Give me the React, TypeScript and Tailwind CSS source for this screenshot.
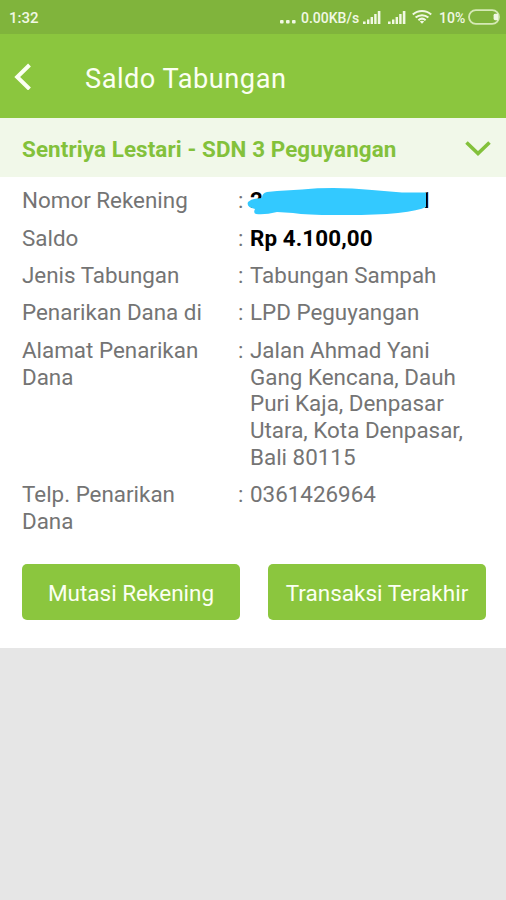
import React from "react";

function Signal() {
  return (
    <svg width="18" height="13" viewBox="0 0 18 13" fill="#f1f8e4">
      <rect x="0" y="10.5" width="2.6" height="2.5" />
      <rect x="4" y="8.5" width="2.4" height="4.5" />
      <rect x="7.6" y="6" width="2.4" height="7" />
      <rect x="11.2" y="3" width="2.4" height="10" />
      <rect x="14.8" y="0" width="2.6" height="13" />
    </svg>
  );
}

function StatusBar() {
  return (
    <div className="flex h-[34px] items-center bg-[#80b43c] pl-[9px] pr-[6px] text-[#f1f8e4]">
      <span className="pt-[3px] text-[15px] font-medium leading-none">1:32</span>
      <div className="ml-auto flex items-center">
        <svg width="16" height="4" viewBox="0 0 16 4" fill="#f1f8e4" className="mt-[10px]">
          <rect x="0" y="0" width="3.6" height="3.6" rx="1" />
          <rect x="6" y="0" width="3.6" height="3.6" rx="1" />
          <rect x="12" y="0" width="3.6" height="3.6" rx="1" />
        </svg>
        <span className="ml-[5px] w-[58px] whitespace-nowrap pt-px text-[14px] font-medium leading-none">0.00KB/s</span>
        <div className="ml-[4px]"><Signal /></div>
        <div className="ml-[7px]"><Signal /></div>
        <svg width="20" height="14" viewBox="0 0 20 14" fill="none" stroke="#f1f8e4" strokeWidth="2" className="ml-[6px]">
          <path d="M0.8 4.6C6 -0.2 14 -0.2 19.2 4.6" />
          <path d="M3.6 7.6C7.3 4.3 12.7 4.3 16.4 7.6" />
          <path d="M6.4 10.2C8.6 8.3 11.4 8.3 13.6 10.2" />
          <path d="M10 13.8L7.8 11.6Q10 10 12.2 11.6Z" fill="#f1f8e4" stroke="none" />
        </svg>
        <span className="ml-[7px] w-[27px] whitespace-nowrap pt-[2px] text-[14px] font-medium leading-none">10%</span>
        <svg width="32" height="16" viewBox="0 0 32 16" fill="none" className="ml-[2px]">
          <rect x="1" y="1.2" width="30" height="13.6" rx="6.8" stroke="#d5e9b5" strokeWidth="1.8" />
          <path d="M30 4.8h-2.8q-1.6 0-1.6 1.4v3.6q0 1.4 1.6 1.4H30z" fill="#f1f8e4" />
        </svg>
      </div>
    </div>
  );
}

function Row({ label, children }: { label: string; children: React.ReactNode }) {
  return (
    <div className="flex items-start">
      <div className="w-[216px] pr-[10px]">{label}</div>
      <div className="w-[12px]">:</div>
      <div className="w-[222px]">{children}</div>
    </div>
  );
}

export default function App() {
  return (
    <div className="flex h-[900px] w-[506px] flex-col overflow-hidden bg-[#e6e6e6] font-['Roboto',sans-serif]">
      <StatusBar />
      <header className="flex h-[84px] items-center bg-[#8bc63e] pl-[14px] text-white">
        <svg width="18" height="28" viewBox="0 0 18 28" fill="none" stroke="#fbfff2" strokeWidth="4">
          <path d="M15.5 3L3.2 15L15.5 27" />
        </svg>
        <h1 className="ml-[53px] mt-[5px] text-[27.2px] leading-8 tracking-[0.5px] text-[#fbfff2]">Saldo Tabungan</h1>
      </header>
      <section className="flex h-[59px] items-center justify-between bg-[#f1f8e9] pl-[22px] pr-[15px] text-[22.4px] font-bold text-[#83c13b]">
        <span className="whitespace-nowrap pt-[4px] tracking-[0.1px]">Sentriya Lestari - SDN 3 Peguyangan</span>
        <svg width="26" height="16" viewBox="0 0 26 16" fill="none" stroke="#83c13b" strokeWidth="3.6">
          <path d="M1.5 2.500L13 13.500L24.5 2.500" />
        </svg>
      </section>
      <main className="h-[471px] bg-white pl-[22px] pt-[10.3px]">
        <div className="flex flex-col gap-[10.7px] text-[22.4px] leading-[26.7px] text-[#747474]">
          <Row label="Nomor Rekening">
            <div className="relative flex w-[182px] justify-between font-bold text-black">
              <span>2</span>
              <span>1</span>
              <svg width="184" height="30" viewBox="0 0 184 30" className="absolute -left-[3px] top-0">
                <path d="M1 15Q4 12 10 11.500L15 11Q15 6 20 5L30 4L55 2.500Q88 -0.500 125 3L155 5.500H179V20Q172 23.500 151 26Q125 28.500 88 28Q60 28 46 26L30 25Q18 28 9 27Q6 26 8 22Q-1 20 1 15Z" fill="#33c9ff" />
              </svg>
            </div>
          </Row>
          <Row label="Saldo"><div className="font-bold tracking-[0.1px] text-black">Rp 4.100,00</div></Row>
          <Row label="Jenis Tabungan">Tabungan Sampah</Row>
          <Row label="Penarikan Dana di">LPD Peguyangan</Row>
          <Row label="Alamat Penarikan Dana">Jalan Ahmad Yani Gang Kencana, Dauh Puri Kaja, Denpasar Utara, Kota Denpasar, Bali 80115</Row>
          <Row label="Telp. Penarikan Dana">0361426964</Row>
        </div>
        <div className="mt-[29.300px] flex gap-[28px] text-[22.5px] text-[#fbfff2]">
          <button className="h-[56px] w-[218px] whitespace-nowrap rounded-[5px] bg-[#8bc63e] pt-[4px]">Mutasi Rekening</button>
          <button className="h-[56px] w-[218px] whitespace-nowrap rounded-[5px] bg-[#8bc63e] pt-[4px]">Transaksi Terakhir</button>
        </div>
      </main>
    </div>
  );
}
